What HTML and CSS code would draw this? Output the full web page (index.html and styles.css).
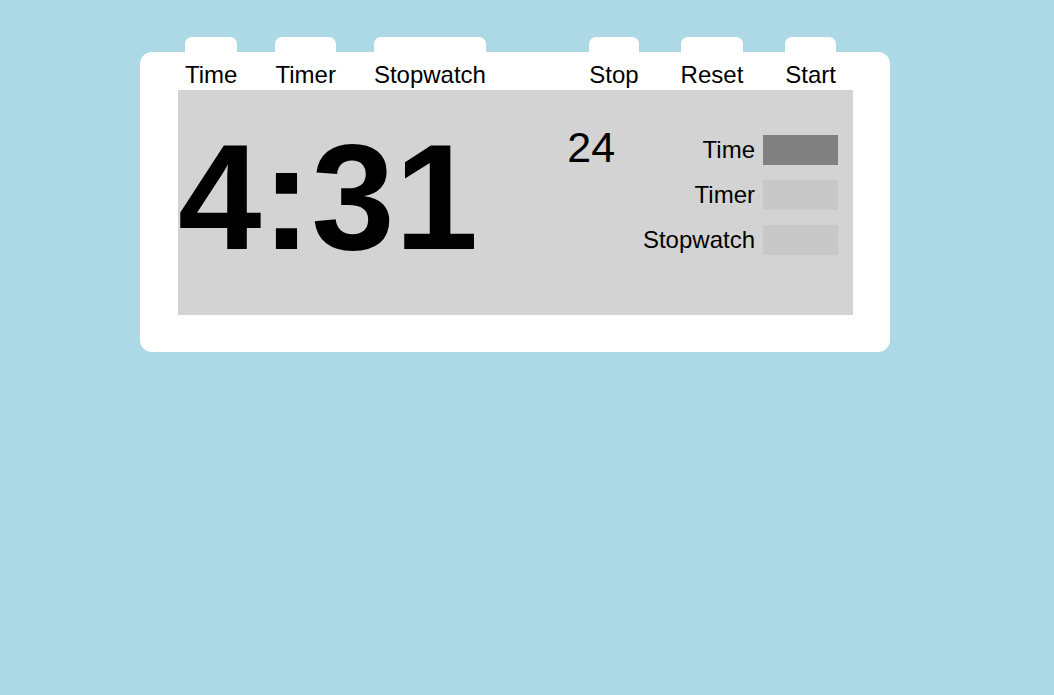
FILE: index.html
```html
<!DOCTYPE html>
<html lang="en">
<head>
  <meta charset="UTF-8">
  <meta name="viewport" content="width=device-width, initial-scale=1.0">
  <title>Clock</title>
  <link rel="stylesheet" href="styles.css">
</head>
<body>
  <div class="clock">
    <div class="buttons">
      <div class="group left">
        <button class="btn">Time</button>
        <button class="btn">Timer</button>
        <button class="btn">Stopwatch</button>
      </div>
      <div class="group right">
        <button class="btn">Stop</button>
        <button class="btn">Reset</button>
        <button class="btn">Start</button>
      </div>
    </div>

    <div class="display">
      <div class="main-time">4:31</div>
      <div class="seconds">24</div>
      <div class="modes">
        <div class="mode"><span>Time</span><div class="light on"></div></div>
        <div class="mode"><span>Timer</span><div class="light"></div></div>
        <div class="mode"><span>Stopwatch</span><div class="light"></div></div>
      </div>
    </div>
  </div>
</body>
</html>
```

FILE: styles.css
```css
body {
  margin: 0;
  background: lightblue;
  font-family: "Liberation Sans", Arial, sans-serif;
  height: 100vh;
  overflow: hidden;
}

.clock {
  width: 750px;
  height: 300px;
  box-sizing: border-box;
  margin: 52px 0 0 140px;
  padding: 0 37px 37px 38px;
  background: white;
  border-radius: 12px;
  display: flex;
  flex-direction: column;
}

.buttons {
  display: flex;
  justify-content: space-between;
  margin-top: -15px;
  height: 53px;
  padding: 0 17px 0 7px;
}

.group {
  display: flex;
}

.group.left  { gap: 38px; }
.group.right { gap: 42px; }

.btn {
  background: white;
  border: none;
  border-radius: 7px 7px 0 0;
  padding: 24px 0 0 0;
  margin: 0;
  font-family: inherit;
  font-size: 24px;
  color: black;
  line-height: normal;
  align-self: flex-start;
  cursor: pointer;
}

.display {
  flex: 1;
  background: lightgray;
  display: flex;
  align-items: flex-start;
}

.main-time {
  font-size: 150px;
  font-weight: bold;
  line-height: 172px;
  margin-top: 21px;
}

.seconds {
  font-size: 43px;
  line-height: 50px;
  margin: 32px 0 0 89px;
}

.modes {
  margin: 45px 15px 0 auto;
  display: flex;
  flex-direction: column;
  gap: 15px;
}

.mode {
  display: flex;
  justify-content: flex-end;
  align-items: center;
  gap: 8px;
  font-size: 24px;
}

.light {
  width: 75px;
  height: 30px;
  background: #c8c8c8;
}

.light.on {
  background: gray;
}
```
